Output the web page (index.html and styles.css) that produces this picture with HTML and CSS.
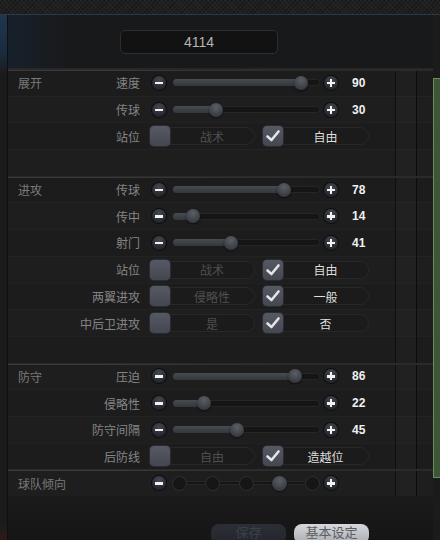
FILE: index.html
```html
<!DOCTYPE html>
<html lang="zh">
<head>
  <meta charset="UTF-8">
  <meta name="viewport" content="width=device-width, initial-scale=1.0">
  <title>战术设定</title>
  <link rel="stylesheet" href="styles.css">
</head>
<body>
  <div class="screen">
    <!-- Top strip -->
    <div class="topbar"></div>

    <div class="main">
      <div class="left-edge"></div>

      <div class="panel">
        <!-- Formation name -->
        <div class="head">
          <div class="title-box">4114</div>
        </div>

        <!-- Tactic rows -->
        <div class="rows">
          <div class="row group-start">
            <div class="group">展开</div>
            <div class="label">速度</div>
            <div class="slider">
              <span class="btn minus"></span>
              <span class="track" style="--v:90"><span class="fill"></span><span class="knob"></span></span>
              <span class="btn plus"></span>
              <span class="value">90</span>
            </div>
          </div>
          <div class="row">
            <div class="group"></div>
            <div class="label">传球</div>
            <div class="slider">
              <span class="btn minus"></span>
              <span class="track" style="--v:30"><span class="fill"></span><span class="knob"></span></span>
              <span class="btn plus"></span>
              <span class="value">30</span>
            </div>
          </div>
          <div class="row">
            <div class="group"></div>
            <div class="label">站位</div>
            <div class="options">
              <div class="opt"><span class="check"></span><span class="opt-text">战术</span></div>
              <div class="opt on"><span class="check"><svg viewBox="0 0 20 20"><polyline points="4.5,10.5 8.5,14 15.5,5.5"/></svg></span><span class="opt-text">自由</span></div>
            </div>
          </div>
          <div class="row"></div>

          <div class="row group-start">
            <div class="group">进攻</div>
            <div class="label">传球</div>
            <div class="slider">
              <span class="btn minus"></span>
              <span class="track" style="--v:78"><span class="fill"></span><span class="knob"></span></span>
              <span class="btn plus"></span>
              <span class="value">78</span>
            </div>
          </div>
          <div class="row">
            <div class="group"></div>
            <div class="label">传中</div>
            <div class="slider">
              <span class="btn minus"></span>
              <span class="track" style="--v:14"><span class="fill"></span><span class="knob"></span></span>
              <span class="btn plus"></span>
              <span class="value">14</span>
            </div>
          </div>
          <div class="row">
            <div class="group"></div>
            <div class="label">射门</div>
            <div class="slider">
              <span class="btn minus"></span>
              <span class="track" style="--v:41"><span class="fill"></span><span class="knob"></span></span>
              <span class="btn plus"></span>
              <span class="value">41</span>
            </div>
          </div>
          <div class="row">
            <div class="group"></div>
            <div class="label">站位</div>
            <div class="options">
              <div class="opt"><span class="check"></span><span class="opt-text">战术</span></div>
              <div class="opt on"><span class="check"><svg viewBox="0 0 20 20"><polyline points="4.5,10.5 8.5,14 15.5,5.5"/></svg></span><span class="opt-text">自由</span></div>
            </div>
          </div>
          <div class="row">
            <div class="group"></div>
            <div class="label">两翼进攻</div>
            <div class="options">
              <div class="opt"><span class="check"></span><span class="opt-text">侵略性</span></div>
              <div class="opt on"><span class="check"><svg viewBox="0 0 20 20"><polyline points="4.5,10.5 8.5,14 15.5,5.5"/></svg></span><span class="opt-text">一般</span></div>
            </div>
          </div>
          <div class="row">
            <div class="group"></div>
            <div class="label">中后卫进攻</div>
            <div class="options">
              <div class="opt"><span class="check"></span><span class="opt-text">是</span></div>
              <div class="opt on"><span class="check"><svg viewBox="0 0 20 20"><polyline points="4.5,10.5 8.5,14 15.5,5.5"/></svg></span><span class="opt-text">否</span></div>
            </div>
          </div>
          <div class="row"></div>

          <div class="row group-start">
            <div class="group">防守</div>
            <div class="label">压迫</div>
            <div class="slider">
              <span class="btn minus"></span>
              <span class="track" style="--v:86"><span class="fill"></span><span class="knob"></span></span>
              <span class="btn plus"></span>
              <span class="value">86</span>
            </div>
          </div>
          <div class="row">
            <div class="group"></div>
            <div class="label">侵略性</div>
            <div class="slider">
              <span class="btn minus"></span>
              <span class="track" style="--v:22"><span class="fill"></span><span class="knob"></span></span>
              <span class="btn plus"></span>
              <span class="value">22</span>
            </div>
          </div>
          <div class="row">
            <div class="group"></div>
            <div class="label">防守间隔</div>
            <div class="slider">
              <span class="btn minus"></span>
              <span class="track" style="--v:45"><span class="fill"></span><span class="knob"></span></span>
              <span class="btn plus"></span>
              <span class="value">45</span>
            </div>
          </div>
          <div class="row">
            <div class="group"></div>
            <div class="label">后防线</div>
            <div class="options">
              <div class="opt"><span class="check"></span><span class="opt-text">自由</span></div>
              <div class="opt on"><span class="check"><svg viewBox="0 0 20 20"><polyline points="4.5,10.5 8.5,14 15.5,5.5"/></svg></span><span class="opt-text">造越位</span></div>
            </div>
          </div>

          <div class="row group-start">
            <div class="group">球队倾向</div>
            <div class="label"></div>
            <div class="slider">
              <span class="btn minus"></span>
              <span class="stepper">
                <span class="dot"></span>
                <span class="dot"></span>
                <span class="dot"></span>
                <span class="dot active"></span>
                <span class="dot"></span>
              </span>
              <span class="btn plus"></span>
            </div>
          </div>
        </div>

        <!-- Footer buttons -->
        <div class="footer">
          <button class="foot-btn disabled">保存</button>
          <button class="foot-btn light">基本设定</button>
        </div>
      </div>

      <div class="pitch"></div>
    </div>
  </div>
</body>
</html>
```

FILE: styles.css
```css
/* Global */
body {
  margin: 0;
  background: #1b1b1c;
  font-family: "Noto Sans CJK SC", "Liberation Sans", sans-serif;
  overflow: hidden;
}

.screen {
  width: 440px;
  height: 540px;
  display: flex;
  flex-direction: column;
  overflow: hidden;
}

/* Top textured strip */
.topbar {
  height: 14px;
  flex-shrink: 0;
  background-color: #1f1f1f;
  background-image:
    repeating-linear-gradient(45deg, rgba(255,255,255,0.03) 0 1px, transparent 1px 3px),
    repeating-linear-gradient(-45deg, rgba(0,0,0,0.25) 0 1px, transparent 1px 3px);
  border-bottom: 1px solid #2b3a47;
}

.main {
  flex: 1;
  display: flex;
}

.left-edge {
  width: 7px;
  flex-shrink: 0;
  border-right: 1px solid #0f0f0f;
  background:
    linear-gradient(to bottom, #1f3650 0, #1a2a3a 40px, #1a1a1b 60px, #1a1a1b 505px, #2e1a1b 525px);
}

/* Panel */
.panel {
  flex: 1;
  display: flex;
  flex-direction: column;
}

.head {
  height: 53px;
  padding-top: 15px;
  box-sizing: border-box;
  background: linear-gradient(to right, #17212b 0, #18191b 60px, #18191b 100%);
}

.title-box {
  margin-left: 112px;
  width: 156px;
  height: 22px;
  border: 1px solid #2e2e2e;
  border-radius: 5px;
  background: #121212;
  color: #b5b5b5;
  font-family: "Liberation Sans", sans-serif;
  font-size: 14px;
  line-height: 22px;
  text-align: center;
}

/* Rows */
.rows {
  display: grid;
  grid-auto-rows: 26.7px;
  border-top: 1px solid #262626;
}

.row {
  --cols: linear-gradient(to right, transparent 387px, #0e0e0e 387px, #0e0e0e 388px, rgba(255,255,255,0.012) 388px, rgba(255,255,255,0.012) 408px, #0b0b0b 408px, #0b0b0b 409px, transparent 409px);
  display: grid;
  grid-template-columns: 50px 58px auto;
  column-gap: 10px;
  align-items: center;
  padding-left: 10px;
  box-sizing: border-box;
  border-top: 1px solid rgba(255,255,255,0.025);
  background-color: #1c1c1d;
  background-image: var(--cols);
  font-size: 12px;
}

.row:nth-child(even) {
  background-color: #1e1e1f;
}

.row.group-start {
  border-top: 1px solid #2a2a2a;
  background-image: linear-gradient(to right, #3a3a3a, #3a3a3a 95px, #2a2a2a 300px), var(--cols);
  background-size: 100% 1px, 100% 100%;
  background-repeat: no-repeat;
}

.group {
  color: #7a7a7a;
  white-space: nowrap;
}

.label {
  color: #858585;
  text-align: right;
  white-space: nowrap;
  margin-right: -4px;
}

.row > :nth-child(3) {
  margin-left: 4px;
}

/* Slider */
.slider {
  display: flex;
  align-items: center;
}

.btn {
  width: 14px;
  height: 14px;
  border-radius: 50%;
  background: radial-gradient(circle at 50% 30%, #444851, #22252a 75%);
  box-shadow: 0 0 0 1px #0d0d0d;
  position: relative;
  flex-shrink: 0;
}

.btn.minus {
  margin-left: 2px;
}

.btn::before {
  content: "";
  position: absolute;
  left: 3px;
  top: 6px;
  width: 8px;
  height: 2.5px;
  background: #f2f2f2;
}

.btn.plus::after {
  content: "";
  position: absolute;
  left: 5.75px;
  top: 3px;
  width: 2.5px;
  height: 8px;
  background: #f2f2f2;
}

.track {
  width: 147px;
  height: 7px;
  margin: 0 4px 0 7px;
  border-radius: 4px;
  background: #151515;
  box-shadow: inset 0 0 0 1px #262626;
  position: relative;
}

.fill {
  position: absolute;
  left: 0;
  top: 0;
  height: 7px;
  width: calc(var(--v) * 1.42px);
  border-radius: 4px 0 0 4px;
  background: linear-gradient(to bottom, #484b50, #33363a);
}

.knob {
  position: absolute;
  top: -3.5px;
  left: calc(var(--v) * 1.42px - 7px);
  width: 14px;
  height: 14px;
  border-radius: 50%;
  background: radial-gradient(circle at 50% 30%, #5a5f66, #363a40 75%);
  box-shadow: 0 1px 2px rgba(0,0,0,0.6);
}

.value {
  margin-left: 14px;
  color: #f0f0f0;
  font-family: "Liberation Sans", sans-serif;
  font-size: 12px;
  font-weight: bold;
}

/* Stepper */
.stepper {
  width: 148px;
  margin: 0 4px 0 6px;
  display: flex;
  justify-content: space-between;
  position: relative;
}

.stepper::before {
  content: "";
  position: absolute;
  left: 7px;
  right: 7px;
  top: 5px;
  height: 4px;
  background: #151515;
  box-shadow: inset 0 0 0 1px #272727;
}

.dot {
  width: 15px;
  height: 15px;
  border-radius: 50%;
  background: #161616;
  box-shadow: inset 0 0 0 1px #2e2e2e;
  position: relative;
}

.dot.active {
  background: radial-gradient(circle at 50% 30%, #5a5f66, #363a40 75%);
  box-shadow: 0 1px 2px rgba(0,0,0,0.6);
}

/* Option pills */
.options {
  display: flex;
  gap: 8px;
}

.opt {
  width: 103px;
  height: 16px;
  border: 1px solid #282828;
  border-radius: 9px;
  background: #1b1b1b;
  display: flex;
  align-items: center;
}

.opt.on {
  width: 104px;
}

.check {
  width: 20px;
  height: 20px;
  margin-left: -1px;
  border-radius: 4px;
  background: linear-gradient(to bottom, #555964, #444750);
  box-shadow: 0 0 0 1px #2a2c31;
  flex-shrink: 0;
}

.check svg {
  width: 20px;
  height: 20px;
  display: block;
}

.check polyline {
  fill: none;
  stroke: #e4e4e4;
  stroke-width: 2.6;
  stroke-linecap: round;
  stroke-linejoin: round;
}

.opt-text {
  flex: 1;
  text-align: center;
  color: #4f4f4f;
  font-size: 12px;
}

.opt.on .opt-text {
  color: #dedede;
}

/* Footer */
.footer {
  flex: 1;
  display: flex;
  align-items: flex-start;
  gap: 8px;
  padding: 28px 0 0 203px;
  background: linear-gradient(to bottom, #1a1a1b, #151516);
}

.foot-btn {
  width: 75px;
  height: 20px;
  border: none;
  border-radius: 8px;
  font-family: "Noto Sans CJK SC", sans-serif;
  font-size: 13px;
  line-height: 16px;
  padding: 0;
  display: flex;
  justify-content: center;
  align-items: flex-start;
}

.foot-btn.disabled {
  background: linear-gradient(to bottom, #2c3036, #22262b);
  color: #3b4048;
}

.foot-btn.light {
  background: linear-gradient(to bottom, #d6d8db, #a9acb0);
  color: #5a5d62;
}

/* Pitch edge on the right */
.pitch {
  width: 7px;
  height: 400px;
  margin-top: 63px;
  flex-shrink: 0;
  border-left: 1px solid #6e8a63;
  border-top: 1px solid #6e8a63;
  border-bottom: 1px solid #6e8a63;
  box-sizing: border-box;
  background: #3c5636;
}
```
